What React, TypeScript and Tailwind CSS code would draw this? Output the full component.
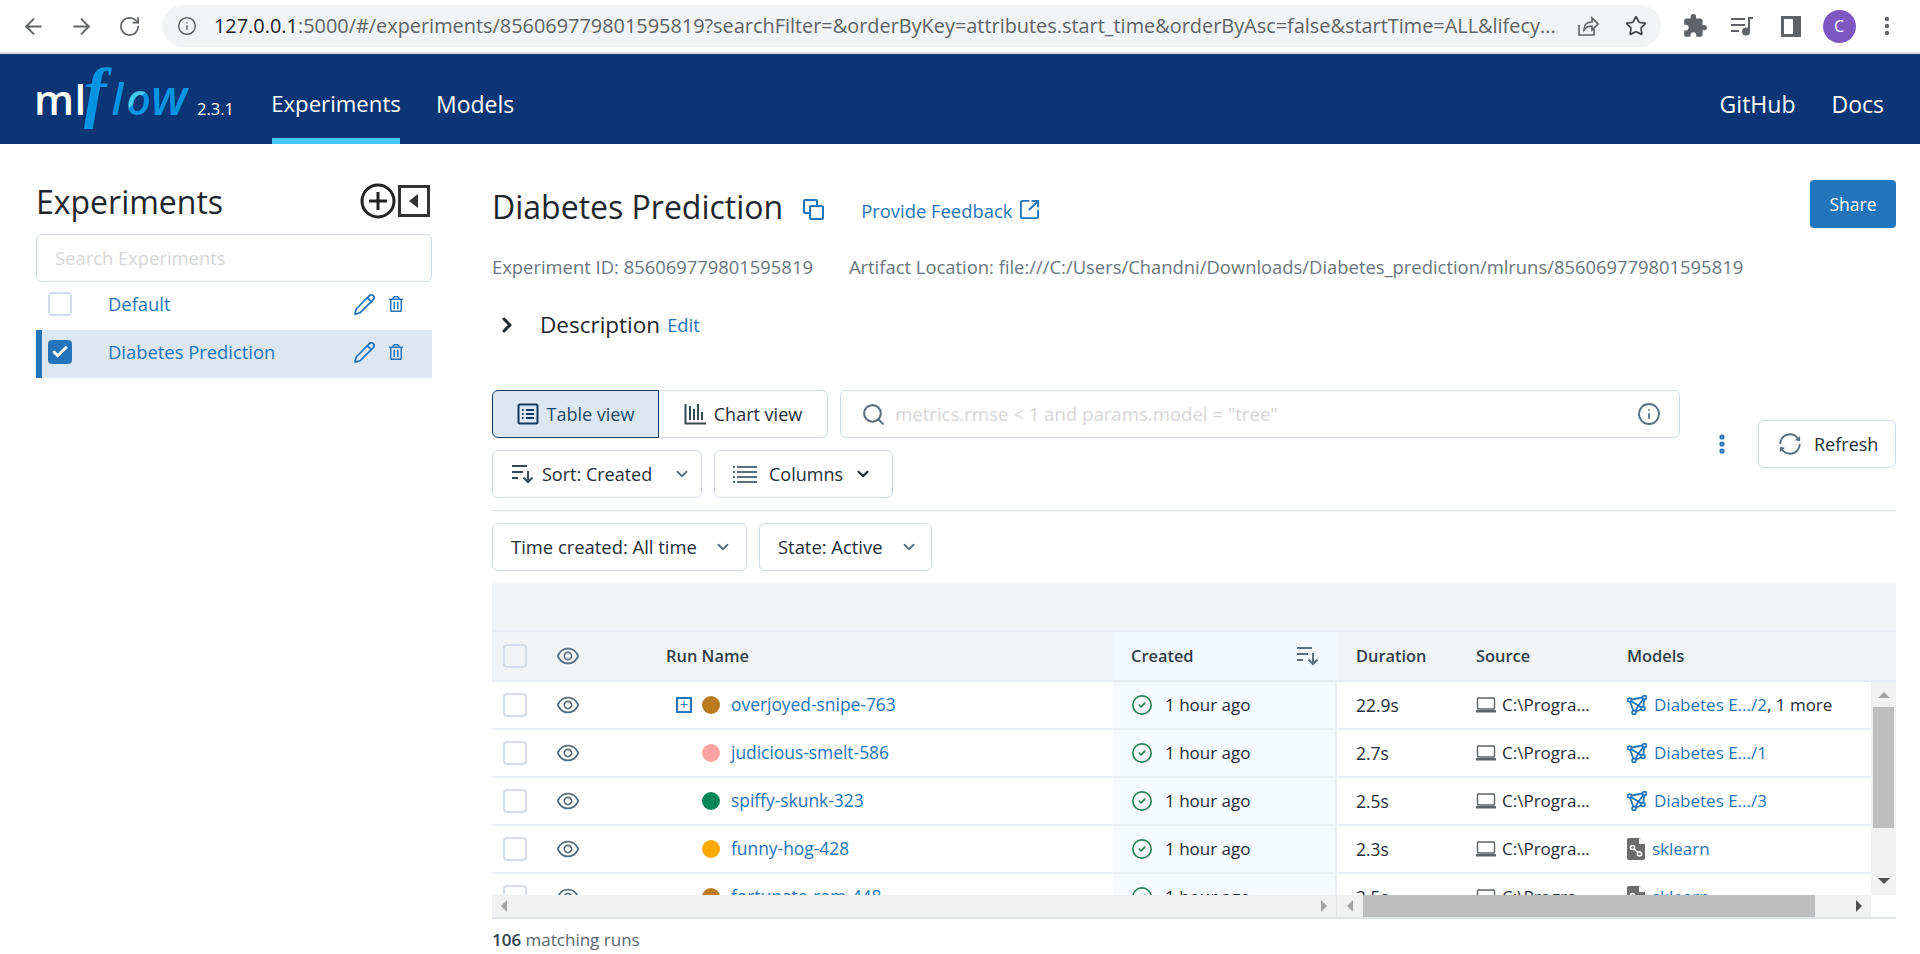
import React from "react";
import {
  ArrowLeft,
  ArrowRight,
  RotateCw,
  Info,
  Star,
  MoreVertical,
  ChevronRight,
  ChevronDown,
  Search,
  CircleCheck,
  Pencil,
  SquareArrowOutUpRight,
  Check,
} from "lucide-react";
import { AiOutlineEye, AiOutlineSync } from "react-icons/ai";
import { FaRegTrashAlt } from "react-icons/fa";
import { MdExtension } from "react-icons/md";

const font = "font-['Open_Sans','Noto_Sans',sans-serif]";

const TableIcon = () => (
  <svg width="22" height="22" viewBox="0 0 22 22" fill="none" stroke="#0e3a5f" strokeWidth="2">
    <rect x="1.5" y="1.5" width="19" height="19" rx="1.5" />
    <path d="M5 7h1.6M9 7h8M5 11h1.6M9 11h8M5 15h1.6M9 15h8" />
  </svg>
);

const ChartIcon = () => (
  <svg width="22" height="22" viewBox="0 0 22 22" fill="none" stroke="#37474f" strokeWidth="2">
    <path d="M1.5 1v19.5H22M6 3v14M10 6v11M14 1v16M18 9v8" />
  </svg>
);

const SortIcon = ({ color = "#37474f" }: { color?: string }) => (
  <svg width="22" height="20" viewBox="0 0 22 20" fill="none" stroke={color} strokeWidth="2">
    <path d="M0 2h15M0 8h11M0 14h6M16 7v11M11.5 13.5l4.5 4.5 4.5-4.5" />
  </svg>
);

const ColumnsIcon = () => (
  <svg width="24" height="18" viewBox="0 0 24 18" fill="none" stroke="#5a6f80" strokeWidth="2">
    <path d="M0 2h2M4 2h20M0 7h2M4 7h20M0 12h2M4 12h20M0 17h2M4 17h20" />
  </svg>
);

const ModelIcon = () => (
  <svg width="20" height="20" viewBox="0 0 20 20" fill="none" stroke="#2374bb" strokeWidth="1.8" className="shrink-0">
    <path d="M2.5 5L17.5 2L16 13.5L7 17.5L2.5 5ZM2.5 5L16 13.5M17.5 2L7 17.5" />
    <circle cx="2.5" cy="5" r="1.9" fill="white" />
    <circle cx="17.5" cy="2.5" r="1.9" fill="white" />
    <circle cx="16" cy="13.5" r="1.9" fill="white" />
    <circle cx="7" cy="17.5" r="1.9" fill="white" />
  </svg>
);

const SklearnIcon = () => (
  <svg width="18" height="22" viewBox="0 0 18 22" className="shrink-0">
    <path d="M2 0h10l6 6v14a2 2 0 0 1-2 2H2a2 2 0 0 1-2-2V2a2 2 0 0 1 2-2z" fill="#6b6b6b" />
    <path d="M12 0l6 6h-6z" fill="#ffffff" />
    <circle cx="5.5" cy="9.5" r="2" fill="none" stroke="#fff" strokeWidth="1.6" />
    <circle cx="12.5" cy="16" r="2" fill="none" stroke="#fff" strokeWidth="1.6" />
    <path d="M7 11l4 3.5" stroke="#fff" strokeWidth="1.6" />
  </svg>
);

const LaptopIcon = () => (
  <svg width="20" height="16" viewBox="0 0 20 16" fill="none" className="shrink-0">
    <rect x="1.5" y="1" width="17" height="11" rx="1" stroke="#5f6368" strokeWidth="1.4" />
    <rect x="0" y="13" width="20" height="2.4" rx="0.6" fill="#5f6368" />
  </svg>
);

const Caret = ({ dir, color = "#a3a3a3" }: { dir: "left" | "right" | "up" | "down"; color?: string }) => (
  <svg width="12" height="12" viewBox="0 0 12 12" fill={color} className="shrink-0">
    {dir === "left" && <path d="M9 0v12L3 6z" />}
    {dir === "right" && <path d="M3 0v12l6-6z" />}
    {dir === "up" && <path d="M0 9h12L6 3z" />}
    {dir === "down" && <path d="M0 3h12L6 9z" />}
  </svg>
);

const Box = ({ faded }: { faded?: boolean }) => (
  <div className={`w-6 h-6 rounded border-2 border-[#d3deea] shrink-0 ${faded ? "bg-[#f1f4f7]" : "bg-white"}`} />
);

const Btn = ({ className, children }: { className: string; children: React.ReactNode }) => (
  <div className={`h-12 flex items-center border border-[#cfdbe8] rounded-md bg-white text-[#1f2d3a] ${className}`}>
    {children}
  </div>
);

const RowIcons = () => (
  <div className="ml-auto flex items-center gap-[12px]">
    <Pencil size={23} strokeWidth={1.8} />
    <FaRegTrashAlt size={16} />
  </div>
);

type Row = {
  name: string;
  dot: string;
  expand?: boolean;
  dur: string;
  model: string;
  more?: boolean;
  sk?: boolean;
};

const rows: Row[] = [
  { name: "overjoyed-snipe-763", dot: "#b97a21", expand: true, dur: "22.9s", model: "Diabetes E.../2", more: true },
  { name: "judicious-smelt-586", dot: "#ffa3a3", dur: "2.7s", model: "Diabetes E.../1" },
  { name: "spiffy-skunk-323", dot: "#08875a", dur: "2.5s", model: "Diabetes E.../3" },
  { name: "funny-hog-428", dot: "#ffab00", dur: "2.3s", model: "sklearn", sk: true },
  { name: "fortunate-ram-448", dot: "#b97a21", dur: "2.5s", model: "sklearn", sk: true },
];

const gridCols = "grid grid-cols-[60px_561px_224px_120px_151px_263px]";

export default function App() {
  return (
    <div className={`w-[1920px] h-[954px] overflow-hidden bg-white flex flex-col ${font}`}>
      <div className="h-[54px] border-b-2 border-[#dadce0] flex items-center text-[#5f6368] shrink-0">
        <div className="flex items-center pl-[9px] mr-[9px]">
          <div className="w-[48px] flex justify-center"><ArrowLeft size={25} strokeWidth={1.8} /></div>
          <div className="w-[48px] flex justify-center"><ArrowRight size={25} strokeWidth={1.8} /></div>
          <div className="w-[48px] flex justify-center"><RotateCw size={23} strokeWidth={1.8} /></div>
        </div>
        <div className="w-[1499px] h-[42px] rounded-full bg-[#f1f3f4] flex items-center pl-[15px] pr-[14px]">
          <Info size={20} strokeWidth={1.8} className="mr-[17px] shrink-0" />
          <span className="text-[19.9px] whitespace-nowrap text-[#5f6368]">
            <span className="text-[#202124]">127.0.0.1</span>
            :5000/#/experiments/856069779801595819?searchFilter=&orderByKey=attributes.start_time&orderByAsc=false&startTime=ALL&lifecy...
          </span>
          <div className="ml-auto flex items-center gap-[26px]">
            <svg width="22" height="22" viewBox="0 0 22 22" fill="none" stroke="#5f6368" strokeWidth="1.6">
              <path d="M2 10v10h15v-6M7 15c0-5 3-8 8-8V3l6 6-6 6v-4c-4 0-6 1-8 4z" />
            </svg>
            <Star size={22} strokeWidth={1.8} className="text-[#3c4043]" />
          </div>
        </div>
        <div className="flex items-center pl-[10px]">
          <div className="w-[48px] flex justify-center"><MdExtension size={26} /></div>
          <div className="w-[48px] flex justify-center">
            <svg width="24" height="20" viewBox="0 0 24 20" fill="none" stroke="#5f6368" strokeWidth="2">
              <path d="M0 3h14M0 9h14M0 15h8M22 2h-4v13" />
              <circle cx="15" cy="15.5" r="3" fill="#5f6368" />
            </svg>
          </div>
          <div className="w-[48px] flex justify-center">
            <div className="w-[20px] h-[21px] border-[3px] border-[#5f6368] border-r-[8px]" />
          </div>
          <div className="w-[48px] flex justify-center">
            <div className="w-[33px] h-[33px] rounded-full bg-[#7e57c2] text-white text-[16px] flex items-center justify-center">C</div>
          </div>
          <div className="w-[48px] flex justify-center"><MoreVertical size={24} strokeWidth={2.4} /></div>
        </div>
      </div>

      <div className="h-[90px] bg-[#0b3574] flex text-white shrink-0 text-[23px]">
        <div className="w-[272px] pl-[34px] flex items-baseline whitespace-nowrap leading-[70px] pt-[3px] h-full">
          <span className="text-[42px] font-semibold tracking-[0.5px]">ml</span>
          <span className="text-[68px] leading-[70px] italic font-bold text-[#0194e2] font-['Liberation_Serif',serif] -ml-[3px]">f</span>
          <span className="text-[43px] italic font-semibold text-[#0194e2] ml-[5px]">l</span>
          <span className="text-[43px] italic font-semibold ml-[3px] bg-[linear-gradient(135deg,#43c9ed_50%,#0194e2_50%)] bg-clip-text text-transparent">o</span>
          <span className="text-[48px] italic font-semibold text-[#0194e2] tracking-[1px]">w</span>
          <span className="text-[16.5px] ml-[9px]">2.3.1</span>
        </div>
        <div className="w-[128px] flex items-center justify-center border-b-[6px] border-[#43c9ed] pt-[16px] text-[22.2px]">Experiments</div>
        <div className="ml-[36px] flex items-center pt-[10px]">Models</div>
        <div className="ml-auto flex items-center gap-[36px] pr-[36px] pt-[10px]">
          <span>GitHub</span>
          <span>Docs</span>
        </div>
      </div>

      <div className="flex-1 flex min-h-0">
        <div className="w-[492px] pl-[36px] pt-[37px] shrink-0">
          <div className="w-[396px]">
            <div className="flex items-center justify-between h-[42px]">
              <span className="text-[32px] text-[#1f272d] font-medium">Experiments</span>
              <div className="flex items-center gap-[2px] pr-[2px] -mt-[2px]">
                <svg width="36" height="36" viewBox="0 0 36 36" fill="none" stroke="#222" strokeWidth="3">
                  <circle cx="18" cy="18" r="16" />
                  <path d="M18 9v18M9 18h18" />
                </svg>
                <svg width="32" height="32" viewBox="0 0 32 32" fill="none" stroke="#333" strokeWidth="3">
                  <rect x="1.5" y="1.5" width="29" height="29" />
                  <path d="M20 9v14l-9-7z" fill="#333" stroke="none" />
                </svg>
              </div>
            </div>
            <div className="mt-[11px] h-[48px] border border-[#cfdbe8] rounded-md flex items-center pl-[18px] text-[18.4px] text-[#d6d6d6]">
              Search Experiments
            </div>
            <div className="h-[48px] flex items-center pb-[4px] pl-[12px] pr-[28px] text-[#2374bb] text-[18.4px]">
              <Box />
              <span className="ml-[36px]">Default</span>
              <RowIcons />
            </div>
            <div className="h-[48px] flex items-center pb-[4px] pl-[6px] pr-[28px] border-l-[6px] border-[#2374bb] bg-[#dce7f3] text-[#2374bb] text-[18.4px]">
              <div className="w-6 h-6 rounded bg-[#2374bb] flex items-center justify-center">
                <Check size={18} strokeWidth={4} className="text-white" />
              </div>
              <span className="ml-[36px]">Diabetes Prediction</span>
              <RowIcons />
            </div>
          </div>
        </div>

        <div className="flex-1 min-w-0 pr-[24px]">
          <div className="h-[97px] pt-[36px] flex items-start">
            <span className="text-[32px] leading-[44px] mt-[5px] text-[#1f272d] font-medium">Diabetes Prediction</span>
            <svg width="21" height="21" viewBox="0 0 21 21" fill="none" stroke="#2374bb" strokeWidth="2" className="ml-[20px] mt-[19px]">
              <rect x="1" y="1" width="13" height="13" rx="1" />
              <rect x="7" y="7" width="13" height="13" rx="1" fill="white" />
            </svg>
            <span className="ml-[37px] mt-[18px] leading-[26px] text-[18.4px] text-[#2374bb]">Provide Feedback</span>
            <SquareArrowOutUpRight size={23} strokeWidth={2} className="ml-[6px] mt-[18px] text-[#2374bb]" />
            <div className="ml-auto h-12 w-[86px] rounded bg-[#2374bb] text-white text-[17.5px] flex items-center justify-center">
              Share
            </div>
          </div>
          <div className="h-[52px] flex items-center text-[18.4px] text-[#6b7680] whitespace-nowrap">
            <span>Experiment ID: 856069779801595819</span>
            <span className="ml-[36px]">Artifact Location: file:///C:/Users/Chandni/Downloads/Diabetes_prediction/mlruns/856069779801595819</span>
          </div>
          <div className="h-[64px] flex items-center">
            <ChevronRight size={24} strokeWidth={3} className="text-[#1f272d] ml-[3px]" />
            <span className="ml-[21px] text-[22.5px] text-[#1f272d]">Description</span>
            <span className="ml-[7px] text-[18.4px] text-[#2374bb]">Edit</span>
          </div>

          <div className="mt-[33px] flex text-[18px]">
            <div className="w-[1188px] shrink-0">
              <div className="flex gap-[12px]">
                <div className="flex">
                  <div className="w-[167px] h-12 flex items-center justify-center gap-[8px] bg-[#dce7f3] border border-[#0e3a5f] rounded-l-md text-[#1f4a6e]">
                    <TableIcon />
                    Table view
                  </div>
                  <div className="w-[169px] h-12 flex items-center justify-center gap-[8px] border border-l-0 border-[#cfdbe8] rounded-r-md text-[#1f2d3a]">
                    <ChartIcon />
                    Chart view
                  </div>
                </div>
                <Btn className="flex-1 px-[20px]">
                  <Search size={25} strokeWidth={2} className="text-[#5a6f80]" />
                  <span className="ml-[9px] text-[18.6px] text-[#d6d6d6]">metrics.rmse &lt; 1 and params.model = "tree"</span>
                  <Info size={24} strokeWidth={1.8} className="ml-auto text-[#5a6f80] -mr-[2px]" />
                </Btn>
              </div>
              <div className="flex gap-[12px] mt-[12px]">
                <Btn className="w-[210px] pl-[19px]">
                  <SortIcon />
                  <span className="ml-[8px]">Sort: Created</span>
                  <ChevronDown size={18} strokeWidth={2.4} className="ml-[21px] text-[#5a6f80]" />
                </Btn>
                <Btn className="w-[179px] pl-[18px]">
                  <ColumnsIcon />
                  <span className="ml-[12px]">Columns</span>
                  <ChevronDown size={18} strokeWidth={2.8} className="ml-[11px] text-[#1f272d]" />
                </Btn>
              </div>
            </div>
            <div className="flex-1 flex items-start pt-[30px]">
              <MoreVertical size={24} strokeWidth={3.2} className="text-[#2374bb] mt-[12px] ml-[30px]" />
              <Btn className="ml-auto w-[138px] pl-[18px]">
                <AiOutlineSync size={26} className="text-[#5a6f80]" />
                <span className="ml-[11px]">Refresh</span>
              </Btn>
            </div>
          </div>

          <div className="h-px bg-[#cfdbe8] mt-[12px]" />

          <div className="flex gap-[12px] mt-[12px] text-[18.4px]">
            <Btn className="w-[255px] pl-[18px]">
              Time created: All time
              <ChevronDown size={18} strokeWidth={2.4} className="ml-[17px] text-[#5a6f80]" />
            </Btn>
            <Btn className="w-[173px] pl-[18px]">
              State: Active
              <ChevronDown size={18} strokeWidth={2.4} className="ml-[17px] text-[#5a6f80]" />
            </Btn>
          </div>

          <div className="mt-[12px] h-[49px] bg-[#f1f4f7] border-b-2 border-[#e6ebf1]" />

          <div className="h-[263px] flex flex-col overflow-hidden text-[17px]">
            <div className="h-[50px] bg-[#f1f4f7] border-b-2 border-[#e6ebf1] font-semibold text-[#333f4a] text-[16.4px] shrink-0">
              <div className={`${gridCols} h-full`}>
                <div className="flex items-center pl-[11px]"><Box faded /></div>
                <div className="flex items-center">
                  <AiOutlineEye size={26} className="text-[#5a6f80] ml-[3px]" />
                  <span className="ml-[85px]">Run Name</span>
                </div>
                <div className="flex items-center pl-[18px] pr-[18px] justify-between bg-[#f0f7ff]">
                  Created
                  <SortIcon color="#5a6f80" />
                </div>
                <div className="flex items-center pl-[19px]">Duration</div>
                <div className="flex items-center pl-[19px]">Source</div>
                <div className="flex items-center pl-[19px]">Models</div>
              </div>
            </div>
            <div className="flex flex-1 min-h-0">
              <div className="w-[1379px] shrink-0 overflow-hidden">
                {rows.map((r) => (
                  <div key={r.name} className={`${gridCols} h-[48px] border-b-2 border-[#e9eef4]`}>
                    <div className="flex items-center pl-[11px]"><Box /></div>
                    <div className="flex items-center">
                      <AiOutlineEye size={26} className="text-[#5a6f80] ml-[3px]" />
                      <div className="ml-[95px] w-[16px] flex items-center justify-center">
                        {r.expand && (
                          <div className="w-[16px] h-[16px] border-2 border-[#2374bb] flex items-center justify-center text-[#2374bb] text-[14px] leading-none">
                            +
                          </div>
                        )}
                      </div>
                      <div className="ml-[10px] w-[18px] h-[18px] rounded-full shrink-0" style={{ background: r.dot }} />
                      <span className="ml-[11px] text-[17.4px] text-[#2374bb] whitespace-nowrap -mt-[1px]">{r.name}</span>
                    </div>
                    <div className="flex items-center pl-[18px] bg-[#f5faff] border-r-2 border-[#e9eef4] text-[#1f2d3a]">
                      <CircleCheck size={22} strokeWidth={1.8} className="text-[#27804f]" />
                      <span className="ml-[12px]">1 hour ago</span>
                    </div>
                    <div className="flex items-center pl-[19px] text-[17.4px] text-[#1f2d3a]">{r.dur}</div>
                    <div className="flex items-center pl-[19px] text-[#1f2d3a]">
                      <LaptopIcon />
                      <span className="ml-[6px]">C:\Progra...</span>
                    </div>
                    <div className="flex items-center pl-[19px] whitespace-nowrap">
                      {r.sk ? <SklearnIcon /> : <ModelIcon />}
                      <span className="ml-[7px] text-[#2374bb]">{r.model}</span>
                      {r.more && <span className="text-[#1f2d3a]">, 1 more</span>}
                    </div>
                  </div>
                ))}
              </div>
              <div className="w-[25px] bg-[#f1f1f1] flex flex-col items-center pt-[7px] pb-[8px]">
                <Caret dir="up" />
                <div className="w-[21px] h-[121px] bg-[#bebebe] mt-[6px]" />
                <div className="mt-auto"><Caret dir="down" color="#505050" /></div>
              </div>
            </div>
          </div>

          <div className="h-[24px] flex border-b-2 border-[#dde4ec] bg-[#f1f1f1]">
            <div className="w-[845px] flex items-center justify-between px-[6px] border-r border-[#e6e6e6]">
              <Caret dir="left" />
              <Caret dir="right" />
            </div>
            <div className="flex-1 flex items-center pl-[7px]">
              <Caret dir="left" />
              <div className="ml-[7px] w-[452px] h-full bg-[#bebebe]" />
              <div className="ml-[38px]"><Caret dir="right" color="#505050" /></div>
            </div>
            <div className="w-[25px] bg-white" />
          </div>
          <div className="mt-[8px] text-[17px] text-[#5a6570]">
            <span className="font-semibold text-[#333f4a]">106</span> matching runs
          </div>
        </div>
      </div>
    </div>
  );
}
